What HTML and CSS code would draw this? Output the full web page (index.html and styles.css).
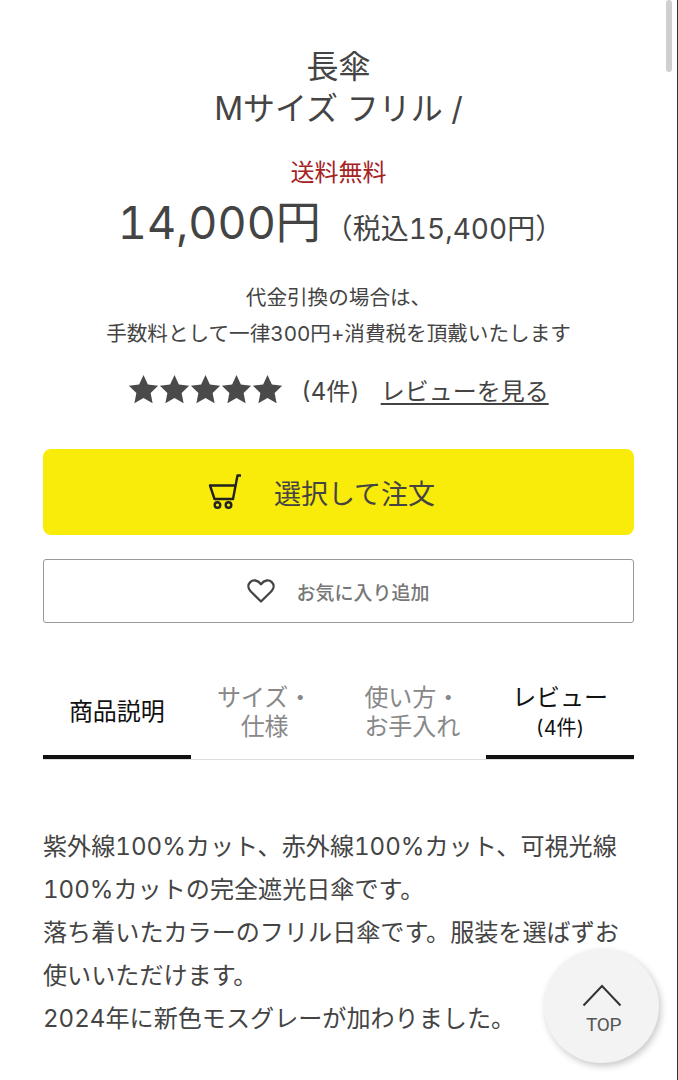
FILE: index.html
```html
<!DOCTYPE html>
<html lang="ja">
<head>
    <meta charset="UTF-8">
    <meta name="viewport" content="width=device-width, initial-scale=1.0">
    <title>長傘 Mサイズ フリル</title>
    <link rel="stylesheet" href="styles.css">
</head>
<body>
    <div class="scroll-thumb"></div>
    <div class="edge"></div>
    <main class="wrap">
        <h1 class="title">長傘<br>Mサイズ フリル /</h1>
        <p class="free">送料無料</p>
        <p class="price"><span class="price-main">14,000円</span><span class="price-tax">（税込15,400円）</span></p>
        <p class="note">代金引換の場合は、<br>手数料として一律300円+消費税を頂戴いたします</p>
        <div class="rating">
            <div class="stars">
                <svg viewBox="0 0 24 24"><path d="M12 .8l3.5 7.6 8.2 1-6 5.7 1.600 8.200L12 19.200l-7.300 4.100 1.600-8.200-6-5.700 8.200-1z"/></svg>
                <svg viewBox="0 0 24 24"><path d="M12 .8l3.5 7.6 8.2 1-6 5.7 1.600 8.200L12 19.200l-7.300 4.100 1.600-8.200-6-5.700 8.200-1z"/></svg>
                <svg viewBox="0 0 24 24"><path d="M12 .8l3.5 7.6 8.2 1-6 5.7 1.600 8.200L12 19.200l-7.300 4.100 1.600-8.200-6-5.700 8.200-1z"/></svg>
                <svg viewBox="0 0 24 24"><path d="M12 .8l3.5 7.6 8.2 1-6 5.7 1.600 8.200L12 19.200l-7.300 4.100 1.600-8.200-6-5.700 8.200-1z"/></svg>
                <svg viewBox="0 0 24 24"><path d="M12 .8l3.5 7.6 8.2 1-6 5.7 1.600 8.200L12 19.200l-7.300 4.100 1.600-8.200-6-5.700 8.200-1z"/></svg>
            </div>
            <span class="count">(4件)</span>
            <a class="review-link" href="#">レビューを見る</a>
        </div>
        <a class="btn-order" href="#">
            <svg class="cart" viewBox="0 0 34 36" fill="none" stroke="#222" stroke-width="2.4">
                <path d="M33 1.500h-3.500L25 25H6.500L2 11.500h25" stroke-linejoin="round"/>
                <circle cx="9.500" cy="31" r="2.800"/>
                <circle cx="20.500" cy="31" r="2.800"/>
            </svg>
            <span>選択して注文</span>
        </a>
        <a class="btn-fav" href="#">
            <svg class="heart" viewBox="0 0 28 24" fill="none" stroke="#444" stroke-width="2.3">
                <path d="M14 22.500L3.600 12.200C.6 9.200.9 5.400 3.200 3.100 5.800.6 10.600.6 14 5.200 17.400.6 22.200.6 24.800 3.100c2.300 2.300 2.600 6.100-.4 9.100z" stroke-linejoin="round"/>
            </svg>
            <span>お気に入り追加</span>
        </a>
        <ul class="tabs">
            <li class="tab on">商品説明</li>
            <li class="tab">サイズ・<br>仕様</li>
            <li class="tab">使い方・<br>お手入れ</li>
            <li class="tab on">レビュー<br><small>(4件)</small></li>
        </ul>
        <p class="desc">紫外線100%カット、赤外線100%カット、可視光線100%カットの完全遮光日傘です。<br>落ち着いたカラーのフリル日傘です。服装を選ばずお使いいただけます。<br>2024年に新色モスグレーが加わりました。</p>
    </main>
    <a class="to-top" href="#">
        <svg viewBox="0 0 40 24" fill="none" stroke="#333" stroke-width="2"><path d="M1.500 22.500L20 3l18.500 19.500"/></svg>
        <span>TOP</span>
    </a>
</body>
</html>
```

FILE: styles.css
```css
html,body,h1,p,ul,li{
    margin: 0;
    padding: 0;
    list-style: none;
}
html,body{
    height: 1080px;
    overflow: hidden;
}
body{
    background: #fff;
    color: #444;
    font-family: Inter, "Noto Sans CJK JP", sans-serif;
    font-variant-numeric: tabular-nums;
}
a{
    color: inherit;
    text-decoration: none;
}
.wrap{
    padding: 46px 44px 0 43px;
    width: 678px;
    box-sizing: border-box;
}
.title{
    font-size: 32px;
    font-weight: 400;
    line-height: 42px;
    text-align: center;
}
.free{
    margin-top: 26px;
    font-size: 24px;
    line-height: 34px;
    color: #a5231f;
    text-align: center;
}
.price{
    display: flex;
    justify-content: center;
    align-items: baseline;
    gap: 4px;
    height: 60px;
    margin-top: 3px;
    padding-left: 4px;
    line-height: 60px;
}
.price-main{
    font-size: 45px;
}
.price-tax{
    font-size: 28px;
}
.note{
    margin-top: 27px;
    font-size: 20.6px;
    line-height: 36px;
    text-align: center;
}
.rating{
    display: flex;
    justify-content: center;
    align-items: center;
    height: 44px;
    margin-top: 15px;
    font-size: 24px;
}
.stars{
    display: flex;
    margin-right: 18px;
}
.stars svg{
    width: 31px;
    height: 30px;
    fill: #4a4a4a;
}
.count{
    margin-right: 21px;
}
.review-link{
    text-decoration: underline;
    text-underline-offset: 3px;
}
.btn-order{
    display: flex;
    justify-content: center;
    align-items: center;
    gap: 32px;
    height: 86px;
    margin-top: 38px;
    padding-right: 34px;
    box-sizing: border-box;
    background: #f9eb0a;
    border-radius: 8px;
    font-size: 27px;
}
.cart{
    width: 34px;
    height: 36px;
}
.btn-fav{
    display: flex;
    justify-content: center;
    align-items: center;
    gap: 21px;
    height: 64px;
    margin-top: 24px;
    border: 1px solid #999;
    border-radius: 3px;
    box-sizing: border-box;
    font-size: 19px;
    font-weight: 500;
    color: #777;
}
.heart{
    width: 28px;
    height: 24px;
}
.tabs{
    display: flex;
    margin-top: 44px;
    border-bottom: 1px solid #ddd;
}
.tab{
    flex: 1;
    height: 92px;
    padding-top: 16px;
    box-sizing: border-box;
    font-size: 24px;
    line-height: 29px;
    color: #888;
    text-align: center;
}
.tab.on{
    color: #111;
    border-bottom: 4px solid #111;
    margin-bottom: -1px;
}
.tab:first-child{
    line-height: 58px;
}
.tab small{
    font-size: 20px;
}
.desc{
    margin-top: 65px;
    font-size: 24.1px;
    line-height: 43px;
}
.to-top{
    position: absolute;
    left: 544px;
    top: 949px;
    display: flex;
    flex-direction: column;
    align-items: center;
    width: 115px;
    height: 114px;
    border-radius: 50%;
    background: #f3f3f3;
    box-shadow: 2px 3px 7px rgba(0,0,0,0.22);
    color: #555;
}
.to-top svg{
    width: 40px;
    height: 24px;
    margin-top: 34px;
}
.to-top span{
    margin-top: 3px;
    margin-left: 4px;
    font-family: Roboto, sans-serif;
    font-size: 19px;
    letter-spacing: -0.3px;
    line-height: 30px;
}
.scroll-thumb{
    position: absolute;
    right: 6px;
    top: 0;
    width: 6px;
    height: 72px;
    border-radius: 3px;
    background: #cfcfcf;
}
.edge{
    position: absolute;
    right: 0;
    top: 0;
    width: 1px;
    height: 100%;
    background: #333;
}
```
